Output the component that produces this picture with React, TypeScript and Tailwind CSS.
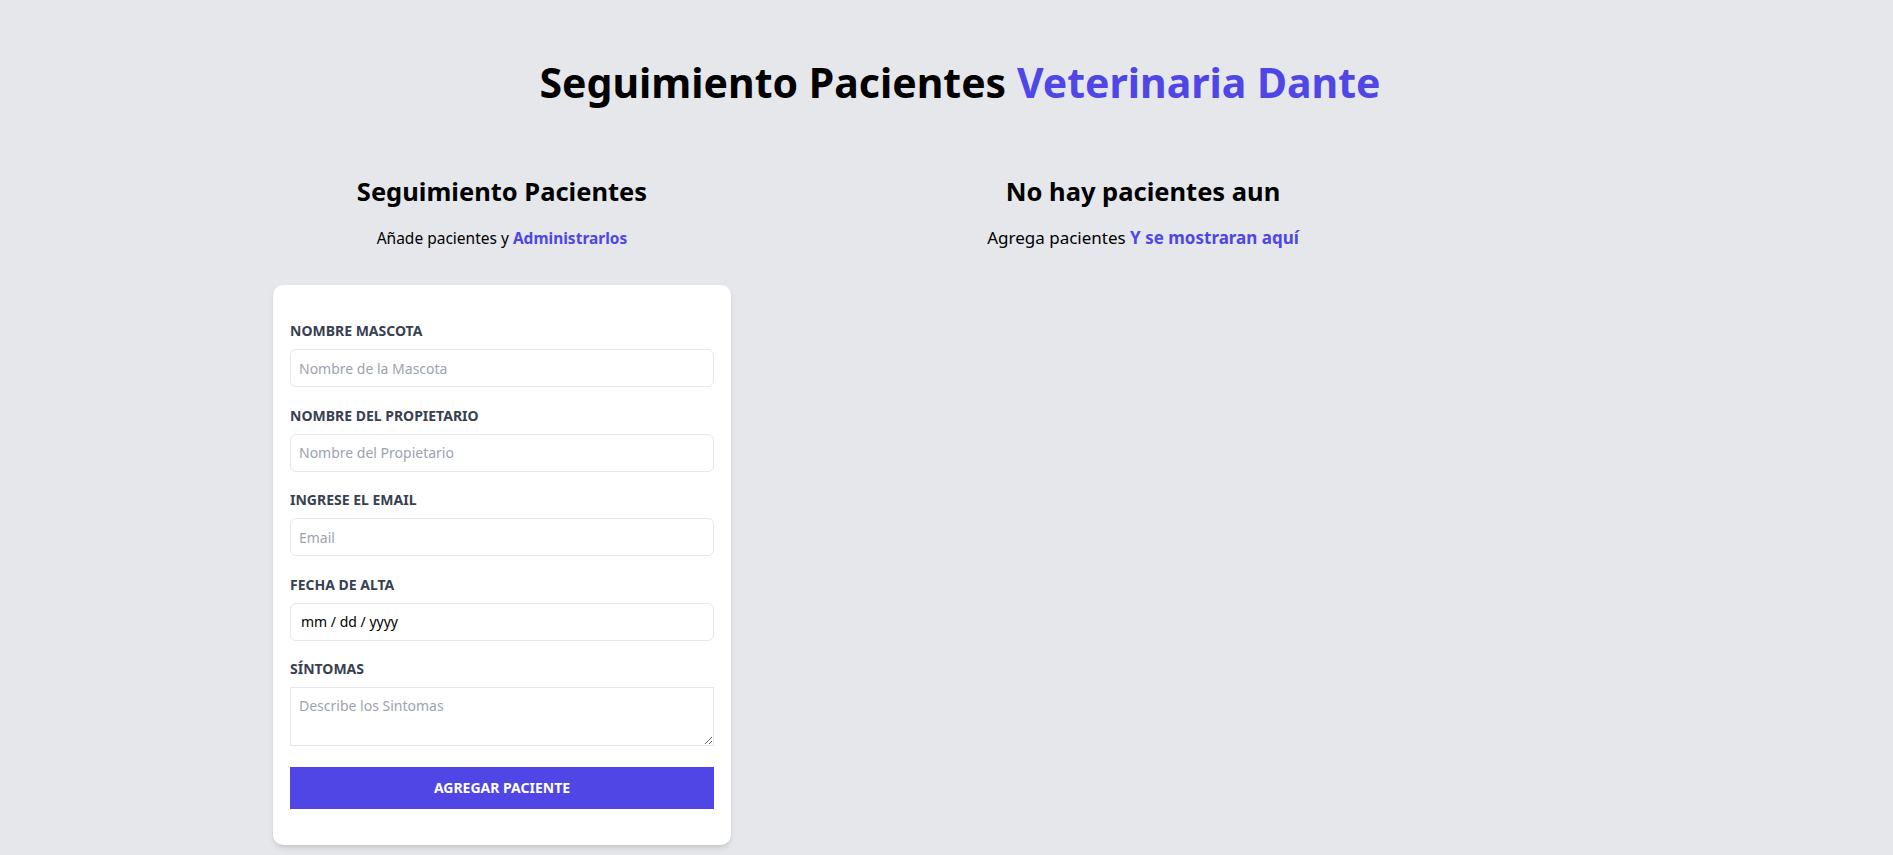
import React from 'react';

const font = { fontFamily: '"Noto Sans", "Open Sans", sans-serif' };

// campo del formulario
const Campo = ({
  label,
  children,
}: {
  label: string;
  children: React.ReactNode;
}) => (
  <div className="flex flex-col">
    <label className="block text-[#374151] uppercase font-bold text-[14px] leading-[20px]">
      {label}
    </label>
    {children}
  </div>
);

const inputCls =
  'mt-2 w-full h-[38px] px-2 border border-[#e5e7eb] rounded-md text-sm text-black placeholder-[#9ca3af] outline-none bg-white';

const Formulario = () => {
  return (
    <div className="w-[458px] shrink-0">
      <h2 className="font-bold text-[25.5px] leading-[32px] text-center mt-[69px]">
        Seguimiento Pacientes
      </h2>
      <p className="text-[15.5px] leading-[24px] text-center mt-[19px]">
        Añade pacientes y{' '}
        <span className="text-[#4f46e5] font-bold">Administrarlos</span>
      </p>

      <form className="bg-white shadow-md rounded-[10px] pt-9 pb-9 px-[17px] mt-[35px] flex flex-col gap-[18.5px]">
        <Campo label="Nombre Mascota">
          <input
            type="text"
            placeholder="Nombre de la Mascota"
            className={inputCls}
          />
        </Campo>
        <Campo label="Nombre del Propietario">
          <input
            type="text"
            placeholder="Nombre del Propietario"
            className={inputCls}
          />
        </Campo>
        <Campo label="Ingrese el Email">
          <input type="email" placeholder="Email" className={inputCls} />
        </Campo>
        <Campo label="Fecha de Alta">
          <input
            type="text"
            placeholder="mm / dd / yyyy"
            className="mt-2 w-full h-[38px] px-[10px] border border-[#e5e7eb] rounded-md text-[14px] placeholder-black outline-none bg-white"
          />
        </Campo>
        <Campo label="Síntomas">
          <textarea
            placeholder="Describe los Sintomas"
            className="mt-2 w-full h-[59px] px-2 py-2 border border-[#e5e7eb] text-sm placeholder-[#9ca3af] outline-none block"
          />
        </Campo>
        <button
          type="button"
          className="bg-[#4f46e5] w-full h-[42px] mt-[2px] text-white uppercase font-bold text-[14px] hover:bg-[#4338ca] cursor-pointer transition-all">
          Agregar Paciente
        </button>
      </form>
    </div>
  );
};

const ListadoPacientes = () => (
  <div className="w-[824px] shrink-0">
    <h2 className="font-bold text-[25.5px] leading-[32px] text-center mt-[69px]">
      No hay pacientes aun
    </h2>
    <p className="text-[17px] leading-[24px] text-center mt-[19px]">
      Agrega pacientes{' '}
      <span className="text-[#4f46e5] font-bold">Y se mostraran aquí</span>
    </p>
  </div>
);

export default function App() {
  return (
    <div className="min-h-screen bg-[#e5e7eb] text-black pb-10" style={font}>
      <h1 className="font-bold text-[41px] leading-[48px] text-center pl-[27px] pt-[58px]">
        Seguimiento Pacientes{' '}
        <span className="text-[#4f46e5]">Veterinaria Dante</span>
      </h1>
      <div className="flex pl-[273px]">
        <Formulario />
        <ListadoPacientes />
      </div>
    </div>
  );
}
